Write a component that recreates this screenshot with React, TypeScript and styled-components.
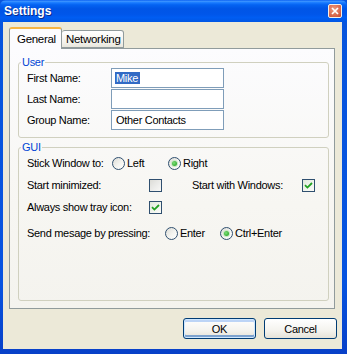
import React from 'react';
import styled, { createGlobalStyle } from 'styled-components';

const GlobalStyle = createGlobalStyle`
  html, body {
    margin: 0;
    padding: 0;
    background: #ffffff;
  }
  * {
    box-sizing: border-box;
  }
`;

const Window = styled.div`
  width: 347px;
  height: 354px;
  display: flex;
  flex-direction: column;
  background: linear-gradient(to bottom, #0855dd 0%, #0653e0 80%, #0840c8 100%);
  font-family: 'Liberation Sans', Arial, sans-serif;
  font-size: 11px;
  letter-spacing: -0.3px;
  color: #000000;
`;

const TitleBar = styled.div`
  height: 22px;
  flex: none;
  display: flex;
  align-items: center;
  justify-content: space-between;
  padding: 0 5px 0 4px;
  border-radius: 6px 6px 0 0;
  background: linear-gradient(
    to bottom,
    #0a5ff2 0%,
    #3b93ff 6%,
    #1a7cff 12%,
    #0463f2 22%,
    #0055e6 40%,
    #0056ea 65%,
    #005df2 80%,
    #0056e4 100%
  );
`;

const Title = styled.span`
  color: #ffffff;
  font-weight: bold;
  font-size: 12px;
  letter-spacing: 0;
  text-shadow: 1px 1px 0 #0a2a8a;
`;

const CloseButton = styled.div`
  width: 14px;
  height: 14px;
  border: 1px solid #f4f0ea;
  border-radius: 2px;
  background: radial-gradient(circle at 40% 35%, #ec9a7e 0%, #dc6e52 55%, #c4492e 100%);
  display: flex;
  align-items: center;
  justify-content: center;
`;

const Frame = styled.div`
  flex: 1;
  display: flex;
  flex-direction: column;
  margin: 0 5px 5px 3px;
  padding: 5px 5px 0 6px;
  background: #ece9d8;
`;

const TabStrip = styled.div`
  display: flex;
  align-items: flex-end;
  height: 21px;
  position: relative;
  z-index: 1;
`;

const Tab = styled.div<{ $active?: boolean; $w: number }>`
  display: flex;
  align-items: center;
  width: ${(p) => p.$w}px;
  height: ${(p) => (p.$active ? '22px' : '18px')};
  margin-bottom: ${(p) => (p.$active ? '-1px' : '0')};
  padding-left: ${(p) => (p.$active ? '7px' : '4px')};
  border: 1px solid #919b9c;
  border-bottom: ${(p) => (p.$active ? 'none' : '1px solid #919b9c')};
  border-left: ${(p) => (p.$active ? '1px solid #919b9c' : 'none')};
  border-top: ${(p) => (p.$active ? '2px solid #f6b544' : '1px solid #919b9c')};
  border-radius: 3px 3px 0 0;
  background: ${(p) =>
    p.$active ? '#fcfcfe' : 'linear-gradient(to bottom, #ffffff 0%, #f3f2ec 70%, #e8e6dc 100%)'};
  font-size: 11.5px;
  white-space: nowrap;
`;

const TabPanel = styled.div`
  height: 261px;
  margin-right: 2px;
  display: flex;
  flex-direction: column;
  padding: 7px 5px 7px 8px;
  border: 1px solid #919b9c;
  background: linear-gradient(to bottom, #fcfcfe 0%, #f7f6f2 60%, #f4f3ee 100%);
`;

const Group = styled.fieldset<{ $grow?: boolean; $gap?: number }>`
  margin: ${(p) => (p.$gap ? `${p.$gap}px 0 0 0` : '0')};
  padding: 0;
  min-width: 0;
  border: 1px solid #d0d0bf;
  border-radius: 3px;
  flex: ${(p) => (p.$grow ? 1 : 'none')};
`;

const Legend = styled.legend`
  margin-left: 2px;
  padding: 0 1px;
  line-height: 12px;
  color: #0046d5;
`;

const UserGrid = styled.div`
  display: grid;
  grid-template-columns: 84px 113px;
  row-gap: 1px;
  align-items: center;
  padding: 0 7px 7px 8px;
`;

const TextBox = styled.div`
  height: 20px;
  display: flex;
  align-items: center;
  padding: 0 4px;
  border: 1px solid #7f9db9;
  background: #ffffff;
  white-space: nowrap;
`;

const Selected = styled.span`
  margin-left: -1px;
  padding: 0 2px 0 1px;
  line-height: 12px;
  background: #316ac5;
  color: #ffffff;
`;

const GuiBody = styled.div`
  display: flex;
  flex-direction: column;
  gap: 2px;
  padding: 0 7px 0 8px;
`;

const Row = styled.div<{ $extra?: number }>`
  display: flex;
  align-items: center;
  height: 20px;
  margin-top: ${(p) => p.$extra ?? 0}px;
`;

const Label = styled.span<{ $w: number; $ml?: number }>`
  width: ${(p) => p.$w}px;
  margin-left: ${(p) => p.$ml ?? 0}px;
  flex: none;
  white-space: nowrap;
`;

const Option = styled.label<{ $w?: number }>`
  display: flex;
  align-items: center;
  gap: 2px;
  width: ${(p) => (p.$w ? `${p.$w}px` : 'auto')};
  flex: none;
  white-space: nowrap;
`;

const RadioCircle = styled.span`
  width: 13px;
  height: 13px;
  flex: none;
  border-radius: 50%;
  border: 1px solid #2f4f6f;
  background: linear-gradient(135deg, #dcdcd7 0%, #f4f4f0 55%, #ffffff 100%);
  display: flex;
  align-items: center;
  justify-content: center;
`;

const RadioDot = styled.span`
  width: 5px;
  height: 5px;
  border-radius: 50%;
  background: radial-gradient(circle at 40% 40%, #7ee07a 0%, #3fb53c 60%, #21a121 100%);
  box-shadow: 0 0 0 1px #c8e8c4;
`;

const CheckBox = styled.span<{ $checked?: boolean }>`
  width: 13px;
  height: 13px;
  flex: none;
  border: 1px solid #2f4f6f;
  background: ${(p) =>
    p.$checked
      ? 'linear-gradient(135deg, #e0e8dc 0%, #f2f5ee 60%, #fbfbf8 100%)'
      : 'linear-gradient(135deg, #dcdcd7 0%, #ececea 55%, #f8f8f6 100%)'};
  display: flex;
  align-items: center;
  justify-content: center;
`;

const ButtonRow = styled.div`
  display: flex;
  justify-content: flex-end;
  gap: 8px;
  margin-top: 9px;
`;

const Button = styled.div<{ $default?: boolean }>`
  width: 73px;
  height: 21px;
  display: flex;
  align-items: center;
  justify-content: center;
  border: 1px solid #003c74;
  border-radius: 3px;
  background: linear-gradient(to bottom, #ffffff 0%, #f4f3ee 60%, #e6e3d8 100%);
  box-shadow: ${(p) =>
    p.$default ? 'inset 0 0 0 1px #cee7ff, inset 0 -2px 0 1px #7da2ce, inset 0 2px 0 1px #bcd4f6' : 'none'};
  font-size: 11px;
`;

const Radio = ({ label, checked, w }: { label: string; checked?: boolean; w?: number }) => (
  <Option $w={w}>
    <RadioCircle>{checked && <RadioDot />}</RadioCircle>
    {label}
  </Option>
);

const Check = ({ checked }: { checked?: boolean }) => (
  <CheckBox $checked={checked}>
    {checked && (
      <svg width="9" height="9" viewBox="0 0 9 9">
        <path d="M1 4.2 L3.4 6.6 L8 2" stroke="#21a121" strokeWidth="1.8" fill="none" />
      </svg>
    )}
  </CheckBox>
);

const App = () => {
  return (
    <>
      <GlobalStyle />
      <Window>
        <TitleBar>
          <Title>Settings</Title>
          <CloseButton>
            <svg width="8" height="8" viewBox="0 0 8 8">
              <path d="M1 1 L7 7 M7 1 L1 7" stroke="#ffffff" strokeWidth="1.7" />
            </svg>
          </CloseButton>
        </TitleBar>
        <Frame>
          <TabStrip>
            <Tab $active $w={53}>
              General
            </Tab>
            <Tab $w={62}>Networking</Tab>
          </TabStrip>
          <TabPanel>
            <Group>
              <Legend>User</Legend>
              <UserGrid>
                <span>First Name:</span>
                <TextBox>
                  <Selected>Mike</Selected>
                </TextBox>
                <span>Last Name:</span>
                <TextBox />
                <span>Group Name:</span>
                <TextBox>Other Contacts</TextBox>
              </UserGrid>
            </Group>
            <Group $grow $gap={3}>
              <Legend>GUI</Legend>
              <GuiBody>
                <Row>
                  <Label $w={85}>Stick Window to:</Label>
                  <Radio label="Left" w={56} />
                  <Radio label="Right" checked />
                </Row>
                <Row>
                  <Label $w={122}>Start minimized:</Label>
                  <Check />
                  <Label $w={110} $ml={30}>
                    Start with Windows:
                  </Label>
                  <Check checked />
                </Row>
                <Row>
                  <Label $w={122}>Always show tray icon:</Label>
                  <Check checked />
                </Row>
                <Row $extra={4}>
                  <Label $w={138}>Send mesage by pressing:</Label>
                  <Radio label="Enter" w={55} />
                  <Radio label="Ctrl+Enter" checked />
                </Row>
              </GuiBody>
            </Group>
          </TabPanel>
          <ButtonRow>
            <Button $default>OK</Button>
            <Button>Cancel</Button>
          </ButtonRow>
        </Frame>
      </Window>
    </>
  );
};

export default App;
